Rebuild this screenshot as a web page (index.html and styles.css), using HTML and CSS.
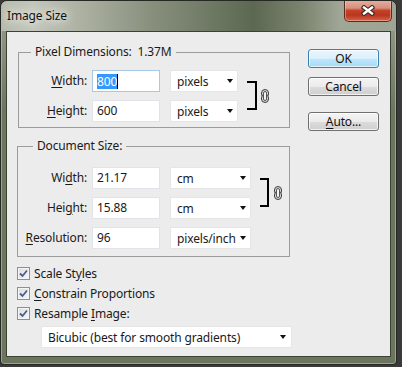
FILE: index.html
```html
<!DOCTYPE html>
<html lang="en">
<head>
  <meta charset="UTF-8">
  <title>Image Size</title>
  <link rel="stylesheet" href="styles.css">
</head>
<body>
  <div class="window">
    <div class="titlebar">
      <span class="title">Image Size</span>
      <button class="close" aria-label="Close">
        <svg width="14" height="11" viewBox="0 0 14 11">
          <path d="M3 2.5 L11 8.5 M11 2.5 L3 8.5" stroke="#3b2622" stroke-width="4.6" stroke-linecap="square"/>
          <path d="M3 2.5 L11 8.5 M11 2.5 L3 8.5" stroke="#fff" stroke-width="2.4" stroke-linecap="square"/>
        </svg>
      </button>
    </div>

    <div class="frame">
      <div class="client">
        <div class="main">
          <div class="groups">
            <fieldset class="group px">
              <legend>Pixel Dimensions:&nbsp; 1.37M</legend>
              <div class="rows">
                <label class="lbl"><u>W</u>idth:</label>
                <div class="field focus"><span class="hl">800</span><span class="caret"></span></div>
                <div class="select"><span>pixels</span><i class="arrow"></i></div>
                <div class="bracket"></div>
                <svg class="chain" width="8" height="14" viewBox="0 0 8 14">
                  <rect x="0.5" y="0.5" width="7" height="8" rx="3.5" fill="#d8d8d8" stroke="#3c3c3c"/>
                  <rect x="0.5" y="5.5" width="7" height="8" rx="3.5" fill="#d8d8d8" stroke="#3c3c3c"/>
                  <rect x="2.5" y="2.5" width="3" height="9" rx="1.5" fill="#f4f4f4" stroke="#555"/>
                </svg>

                <label class="lbl"><u>H</u>eight:</label>
                <div class="field">600</div>
                <div class="select"><span>pixels</span><i class="arrow"></i></div>
              </div>
            </fieldset>

            <fieldset class="group doc">
              <legend>Document Size:</legend>
              <div class="rows">
                <label class="lbl">Wi<u>d</u>th:</label>
                <div class="field">21.17</div>
                <div class="select"><span>cm</span><i class="arrow"></i></div>
                <div class="bracket"></div>
                <svg class="chain" width="8" height="14" viewBox="0 0 8 14">
                  <rect x="0.5" y="0.5" width="7" height="8" rx="3.5" fill="#d8d8d8" stroke="#3c3c3c"/>
                  <rect x="0.5" y="5.5" width="7" height="8" rx="3.5" fill="#d8d8d8" stroke="#3c3c3c"/>
                  <rect x="2.5" y="2.5" width="3" height="9" rx="1.5" fill="#f4f4f4" stroke="#555"/>
                </svg>

                <label class="lbl">Hei<u>g</u>ht:</label>
                <div class="field">15.88</div>
                <div class="select"><span>cm</span><i class="arrow"></i></div>

                <label class="lbl"><u>R</u>esolution:</label>
                <div class="field">96</div>
                <div class="select"><span>pixels/inch</span><i class="arrow"></i></div>
              </div>
            </fieldset>
          </div>

          <div class="buttons">
            <button class="btn default">OK</button>
            <button class="btn">Cancel</button>
            <button class="btn auto"><u>A</u>uto...</button>
          </div>
        </div>

        <div class="checks">
          <label class="check"><span class="box"><svg width="9" height="9" viewBox="0 0 9 9"><path d="M1 4.5 L3.5 7 L8 1.5" fill="none" stroke="#4a5d8c" stroke-width="1.8"/></svg></span><span>Scale St<u>y</u>les</span></label>
          <label class="check"><span class="box"><svg width="9" height="9" viewBox="0 0 9 9"><path d="M1 4.5 L3.5 7 L8 1.5" fill="none" stroke="#4a5d8c" stroke-width="1.8"/></svg></span><span><u>C</u>onstrain Proportions</span></label>
          <label class="check"><span class="box"><svg width="9" height="9" viewBox="0 0 9 9"><path d="M1 4.5 L3.5 7 L8 1.5" fill="none" stroke="#4a5d8c" stroke-width="1.8"/></svg></span><span>Resample <u>I</u>mage:</span></label>
        </div>

        <div class="select method"><span>Bicubic (best for smooth gradients)</span><i class="arrow"></i></div>
      </div>
    </div>
  </div>
</body>
</html>
```

FILE: styles.css
```css
*, *::before, *::after { box-sizing: border-box; }
body {
  margin: 0;
  background: #3a3a3a;
  font-family: "Noto Sans", sans-serif;
  font-size: 12px;
  letter-spacing: -0.15px;
  color: #1a1a1a;
}
u { text-underline-offset: 2px; }

/* window chrome */
.window {
  width: 397px;
  height: 365px;
  border: 1px solid #262923;
  border-radius: 7px 7px 4px 4px;
  background: linear-gradient(to bottom, #9ca192 0, #6c765f 110px);
  box-shadow: inset 0 0 0 1px rgba(215, 220, 205, 0.45);
  display: flex;
  flex-direction: column;
  overflow: hidden;
}
.titlebar {
  height: 30px;
  display: flex;
  align-items: flex-start;
  background: linear-gradient(to right, #b7bbaf 0, #c3c6bb 8%, #a9ae9f 22%, #88907d 38%, #6b7661 55%, #5d6853 64%, #7a836e 76%, #a1a797 86%, #9ea493 100%);
  border-radius: 6px 6px 0 0;
}
.title {
  padding: 7px 0 0 6px;
  line-height: 16px;
  color: #111;
  text-shadow: 0 0 6px #e8eae4, 0 0 10px #e8eae4, 0 0 14px #dfe2da;
}
.close {
  margin: -1px 4px 0 auto;
  width: 48px;
  height: 22px;
  padding: 0;
  border: 1px solid #5e2a20;
  border-top: 0;
  border-radius: 0 0 5px 5px;
  background: linear-gradient(to bottom, #e5b0a2 0, #d7907e 38%, #c4432b 50%, #b9361f 72%, #d4644a 100%);
  box-shadow: inset 0 0 0 1px rgba(255, 210, 200, 0.45);
  display: flex;
  align-items: center;
  justify-content: center;
}
.frame {
  flex: 1;
  display: flex;
  padding: 0 5px 7px;
}
.client {
  flex: 1;
  border: 1px solid #3a4233;
  background: #ececec;
  padding: 12px 10px 0;
}

/* top area */
.main {
  display: flex;
  align-items: flex-start;
}
.groups { width: 273px; }
.group {
  margin: 0;
  border: 1px solid #9c9c9c;
  padding: 10px 0 5px;
  min-width: 0;
}
.group legend {
  line-height: 16px;
  padding: 0 4px;
}
.group.px {
  margin-left: 1px;
  width: 272px;
}
.group.px legend { margin-left: 12px; }
.group.doc {
  margin-top: 10px;
  padding: 13px 0 7px;
}
.group.doc legend { margin-left: 15px; }

.rows {
  display: grid;
  grid-template-columns: 68px 73px 78px 19px 12px;
  grid-auto-rows: 22px;
  row-gap: 8px;
  align-items: center;
}
.doc .rows { grid-template-columns: 69px 73px 91px 18px 12px; }

.lbl {
  text-align: right;
  line-height: 22px;
}
.field {
  margin-left: 5px;
  height: 22px;
  background: #fff;
  border: 1px solid #e1e3e8;
  padding: 0 4px;
  line-height: 20px;
  display: flex;
  align-items: center;
}
.field.focus { border-color: #a9c8e6; }
.hl {
  background: #3399ff;
  color: #fff;
  line-height: 15px;
}
.caret {
  width: 1px;
  height: 15px;
  background: #000;
}
.select {
  margin-left: 10px;
  height: 22px;
  background: #fff;
  border: 1px solid #e6e6e6;
  padding: 0 4px 0 6px;
  display: flex;
  align-items: center;
  justify-content: space-between;
  white-space: nowrap;
}
.arrow {
  flex: none;
  margin-left: 4px;
  width: 0;
  height: 0;
  border-left: 3.5px solid transparent;
  border-right: 3.5px solid transparent;
  border-top: 4px solid #111;
}
.bracket {
  grid-column: 4;
  grid-row: 1 / span 2;
  align-self: stretch;
  margin: 11px 0 12px 9px;
  border: 2px solid #000;
  border-left: 0;
}
.chain {
  grid-column: 5;
  grid-row: 1 / span 2;
  align-self: center;
  margin-left: 4px;
}
.doc .chain { margin-left: 5px; }

.buttons {
  margin: 5px 0 0 18px;
  width: 71px;
  display: flex;
  flex-direction: column;
}
.btn {
  height: 19px;
  margin-bottom: 9px;
  padding: 0;
  font: inherit;
  letter-spacing: inherit;
  color: #111;
  border: 1px solid #707070;
  border-radius: 3px;
  background: linear-gradient(to bottom, #f4f4f4 0, #ebebeb 50%, #dcdcdc 51%, #cfcfcf 100%);
  box-shadow: inset 0 0 0 1px rgba(255, 255, 255, 0.7);
}
.btn.default {
  border-color: #3c7fb1;
  background: linear-gradient(to bottom, #eaf6fd 0, #d9f0fc 50%, #bee6fd 51%, #a7d9f5 100%);
}
.btn.auto { margin-top: 7px; }

/* options */
.checks {
  margin-top: 6px;
  display: flex;
  flex-direction: column;
}
.check {
  height: 20px;
  display: flex;
  align-items: center;
  gap: 4px;
}
.box {
  width: 13px;
  height: 13px;
  border: 1px solid #8e8f8f;
  background: linear-gradient(135deg, #dcdcdc, #f7f7f7);
  box-shadow: inset 0 0 0 1px #f4f4f4;
  display: flex;
  align-items: center;
  justify-content: center;
}
.select.method {
  margin: 3px 0 0 24px;
  width: 251px;
  padding-right: 5px;
}
```
